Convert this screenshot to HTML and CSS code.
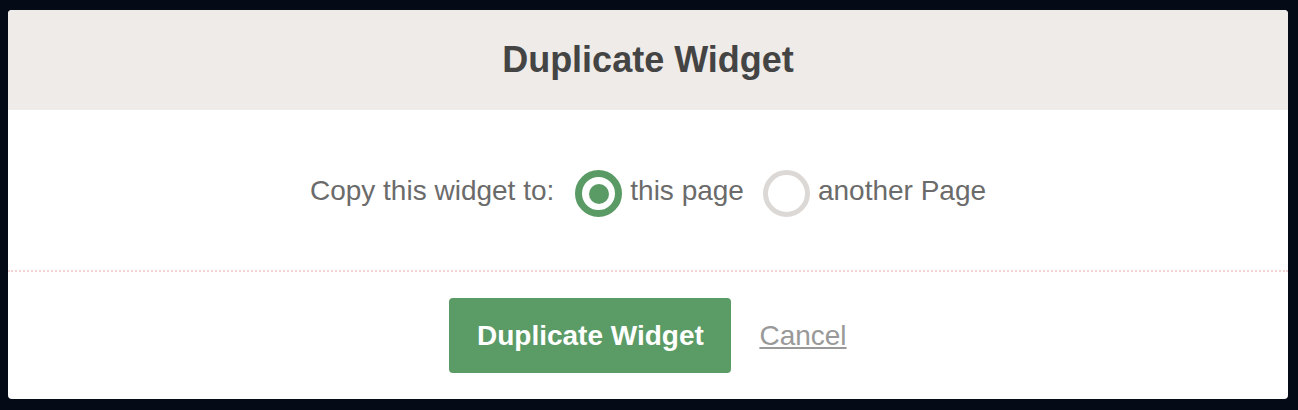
FILE: index.html
```html
<!DOCTYPE html>
<html>
<head>
<meta charset="utf-8">
<link rel="stylesheet" href="styles.css">
</head>
<body>
<div class="dialog">
  <div class="dialog-header">
    <h1 class="dialog-title">Duplicate Widget</h1>
  </div>
  <div class="dialog-body">
    <span class="prompt">Copy this widget to:</span>
    <label class="option option-first">
      <span class="radio radio-checked"><span class="radio-dot"></span></span>
      <span class="option-text">this page</span>
    </label>
    <label class="option option-second">
      <span class="radio"></span>
      <span class="option-text">another Page</span>
    </label>
  </div>
  <div class="dialog-footer">
    <button class="btn-primary">Duplicate Widget</button>
    <a class="cancel-link" href="#">Cancel</a>
  </div>
</div>
</body>
</html>
```

FILE: styles.css
```css
html, body {
  margin: 0;
  padding: 0;
  background: #040a16;
}
body {
  padding: 10px 10px 0 8px;
  font-family: "Liberation Sans", Arial, sans-serif;
}
.dialog {
  width: 1280px;
  background: #ffffff;
  border-radius: 4px;
  overflow: hidden;
}
.dialog-header {
  height: 100px;
  background: #efebe8;
  display: flex;
  align-items: center;
  justify-content: center;
}
.dialog-title {
  margin: 0;
  font-size: 36px;
  font-weight: bold;
  color: #444444;
}
.dialog-body {
  height: 47px;
  padding: 60px 0 53px;
  display: flex;
  align-items: center;
  justify-content: center;
  border-bottom: 2px dotted #f3d4d6;
  font-size: 28px;
  color: #6b6b6b;
}
.prompt,
.option-text {
  padding-bottom: 5px;
}
.option {
  display: flex;
  align-items: center;
}
.option-first {
  margin-left: 21px;
}
.option-second {
  margin-left: 19px;
}
.radio {
  box-sizing: border-box;
  width: 47px;
  height: 47px;
  border-radius: 50%;
  border: 5px solid #dcd8d5;
  display: flex;
  align-items: center;
  justify-content: center;
  margin-right: 8px;
  filter: blur(0.5px);
}
.radio-checked {
  border: 7px solid #5a9a65;
}
.radio-dot {
  width: 20px;
  height: 20px;
  border-radius: 50%;
  background: #5a9a65;
}
.dialog-footer {
  padding: 26px 0;
  display: flex;
  align-items: center;
  justify-content: center;
}
.btn-primary {
  height: 75px;
  width: 282px;
  border: none;
  border-radius: 4px;
  background: #5b9b66;
  color: #ffffff;
  font-family: "Liberation Sans", Arial, sans-serif;
  font-size: 28px;
  font-weight: bold;
  padding: 0;
}
.cancel-link {
  margin-left: 28px;
  font-size: 28px;
  color: #999999;
  text-decoration: underline;
}
```
